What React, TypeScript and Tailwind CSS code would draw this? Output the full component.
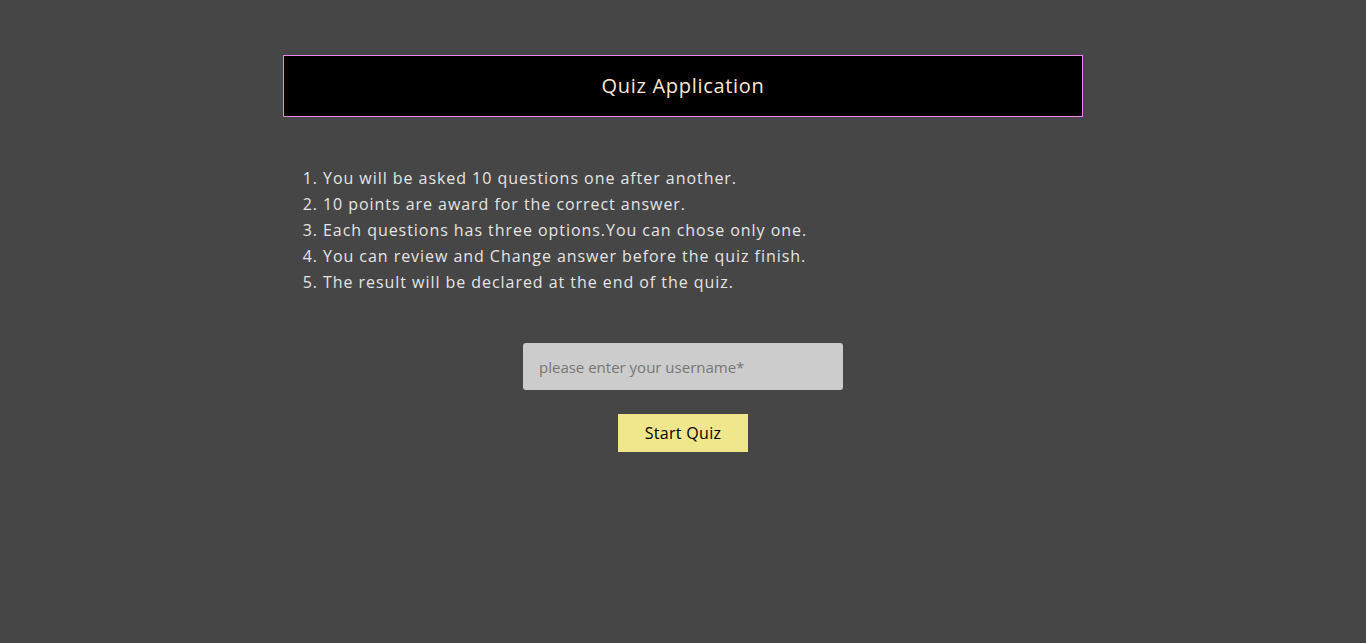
export default function App() {
  const rules = [
    "You will be asked 10 questions one after another.",
    "10 points are award for the correct answer.",
    "Each questions has three options.You can chose only one.",
    "You can review and Change answer before the quiz finish.",
    "The result will be declared at the end of the quiz.",
  ];
  return (
    <div
      className="min-h-[643px] w-full bg-[#464646] pt-[55px]"
      style={{ fontFamily: '"Open Sans", "Noto Sans", sans-serif' }}
    >
      <div className="mx-auto w-[800px]">
        <div className="flex h-[62px] items-center justify-center border border-[#ee82ee] bg-black">
          <h1 className="text-[20px] font-medium tracking-[0.7px] text-[#ffe8d0]">Quiz Application</h1>
        </div>
        <ol className="mt-[48px] list-decimal pl-[40px] text-[16px] leading-[26px] tracking-[0.95px] text-[#e4e4e4]">
          {rules.map((r) => (
            <li key={r}>{r}</li>
          ))}
        </ol>
        <div className="mt-[48px] flex flex-col items-center">
          <input
            className="h-[47px] w-[320px] rounded-[3px] bg-[#cccccc] px-[16px] text-[15px] font-medium text-black outline-none placeholder:text-[#777777]"
            placeholder="please enter your username*"
          />
          <button className="mt-[24px] h-[38px] w-[130px] bg-[#f0e68c] text-[16px] tracking-[0.3px] text-black">
            Start Quiz
          </button>
        </div>
      </div>
    </div>
  );
}
